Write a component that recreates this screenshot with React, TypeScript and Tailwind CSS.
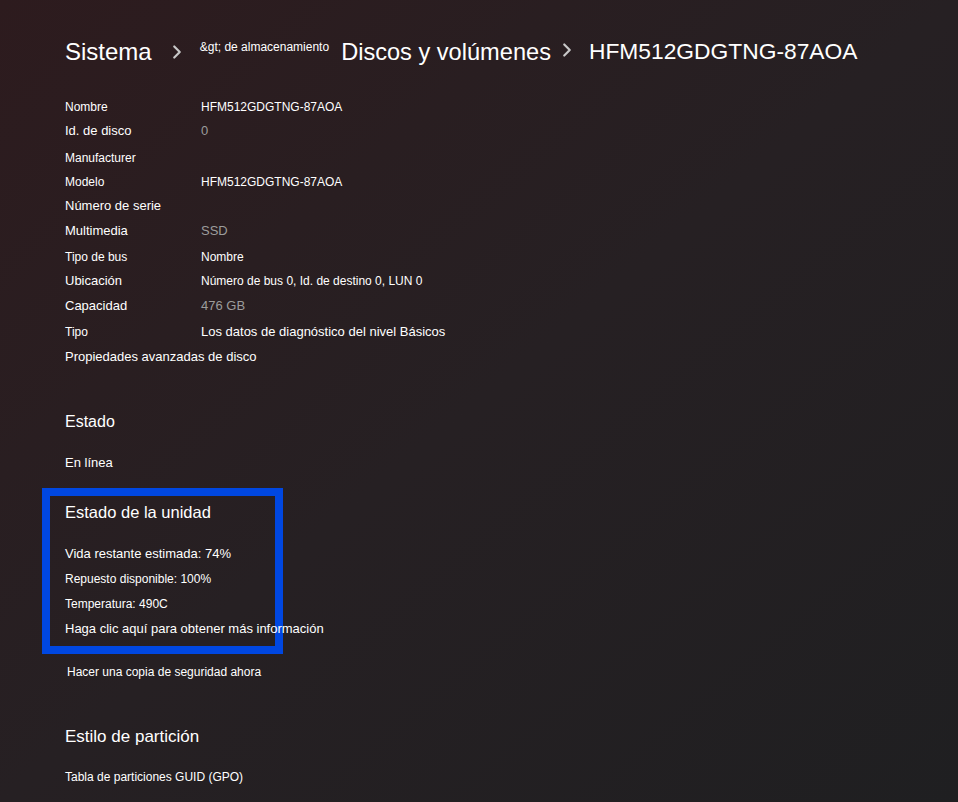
import { ChevronRight } from 'lucide-react';

type Row = { label: string; value?: string; labelSize: string; valueSize?: string; muted?: boolean; gap: string };

const rows: Row[] = [
  { label: 'Nombre', value: 'HFM512GDGTNG-87AOA', labelSize: 'text-[12px]', valueSize: 'text-[12px]', gap: 'mt-0' },
  { label: 'Id. de disco', value: '0', labelSize: 'text-[13px]', valueSize: 'text-[13px]', muted: true, gap: 'mt-0' },
  { label: 'Manufacturer', labelSize: 'text-[12px]', gap: 'mt-[3px]' },
  { label: 'Modelo', value: 'HFM512GDGTNG-87AOA', labelSize: 'text-[12px]', valueSize: 'text-[12px]', gap: 'mt-0' },
  { label: 'Número de serie', labelSize: 'text-[13px]', gap: 'mt-0' },
  { label: 'Multimedia', value: 'SSD', labelSize: 'text-[13px]', valueSize: 'text-[13px]', muted: true, gap: 'mt-[1px]' },
  { label: 'Tipo de bus', value: 'Nombre', labelSize: 'text-[12px]', valueSize: 'text-[12px]', gap: 'mt-[2px]' },
  { label: 'Ubicación', value: 'Número de bus 0, Id. de destino 0, LUN 0', labelSize: 'text-[13px]', valueSize: 'text-[12px]', gap: 'mt-0' },
  { label: 'Capacidad', value: '476 GB', labelSize: 'text-[13px]', valueSize: 'text-[13px]', muted: true, gap: 'mt-[1px]' },
  { label: 'Tipo', value: 'Los datos de diagnóstico del nivel Básicos', labelSize: 'text-[12px]', valueSize: 'text-[13px]', gap: 'mt-[2px]' },
];

export default function App() {
  return (
    <div className="relative h-screen w-full overflow-hidden bg-linear-to-br from-[#2d1b1e] via-[#262023] to-[#1f1f21] font-['Liberation_Sans',Arial,sans-serif] text-white">
      {/* highlight frame */}
      <div className="absolute left-[42px] top-[488px] h-[166px] w-[241px] border-8 border-[#0047e1]" />

      <div className="relative pl-[65px] pt-[38px]">
        {/* Breadcrumb */}
        <div className="flex items-start">
          <span className="text-[24px] leading-[28px]">Sistema</span>
          <ChevronRight size={22} strokeWidth={2.4} className="ml-[14px] mt-[3px] text-[#c8c8c8]" />
          <span className="ml-[12px] mt-[1px] text-[12px] leading-[16px]">&amp;gt; de almacenamiento</span>
          <span className="ml-[12px] text-[23.6px] leading-[28px]">Discos y volúmenes</span>
          <ChevronRight size={22} strokeWidth={2.4} className="ml-[5px] mt-[1px] text-[#c8c8c8]" />
          <span className="ml-[11px] text-[22.8px] leading-[26px]">HFM512GDGTNG-87AOA</span>
        </div>

        {/* Properties */}
        <div className="mt-[29px] flex flex-col">
          {rows.map((r) => (
            <div key={r.label} className={`flex h-[24px] items-center ${r.gap}`}>
              <span className={`w-[136px] shrink-0 ${r.labelSize}`}>{r.label}</span>
              {r.value && (
                <span className={`${r.valueSize} ${r.muted ? 'text-[#9c9c9c]' : 'text-white'}`}>{r.value}</span>
              )}
            </div>
          ))}
          <div className="mt-[1px] flex h-[24px] items-center text-[13px]">Propiedades avanzadas de disco</div>
        </div>

        <div className="mt-[41px] flex h-[24px] items-center text-[16px]">Estado</div>
        <div className="mt-[17px] flex h-[24px] items-center text-[13px]">En línea</div>

        <div className="mt-[25px] flex h-[24px] items-center text-[16.5px]">Estado de la unidad</div>
        <div className="mt-[18px] flex h-[24px] items-center text-[13px]">Vida restante estimada: 74%</div>
        <div className="mt-[1px] flex h-[24px] items-center text-[12px]">Repuesto disponible: 100%</div>
        <div className="mt-[1px] flex h-[24px] items-center text-[12px]">Temperatura: 490C</div>
        <div className="mt-[1px] flex h-[24px] items-center text-[13px]">Haga clic aquí para obtener más información</div>

        <div className="ml-[2px] mt-[19px] flex h-[24px] items-center text-[12px]">Hacer una copia de seguridad ahora</div>

        <div className="mt-[41px] flex h-[24px] items-center text-[17px]">Estilo de partición</div>
        <div className="mt-[16px] flex h-[24px] items-center text-[12px]">Tabla de particiones GUID (GPO)</div>
      </div>
    </div>
  );
}
